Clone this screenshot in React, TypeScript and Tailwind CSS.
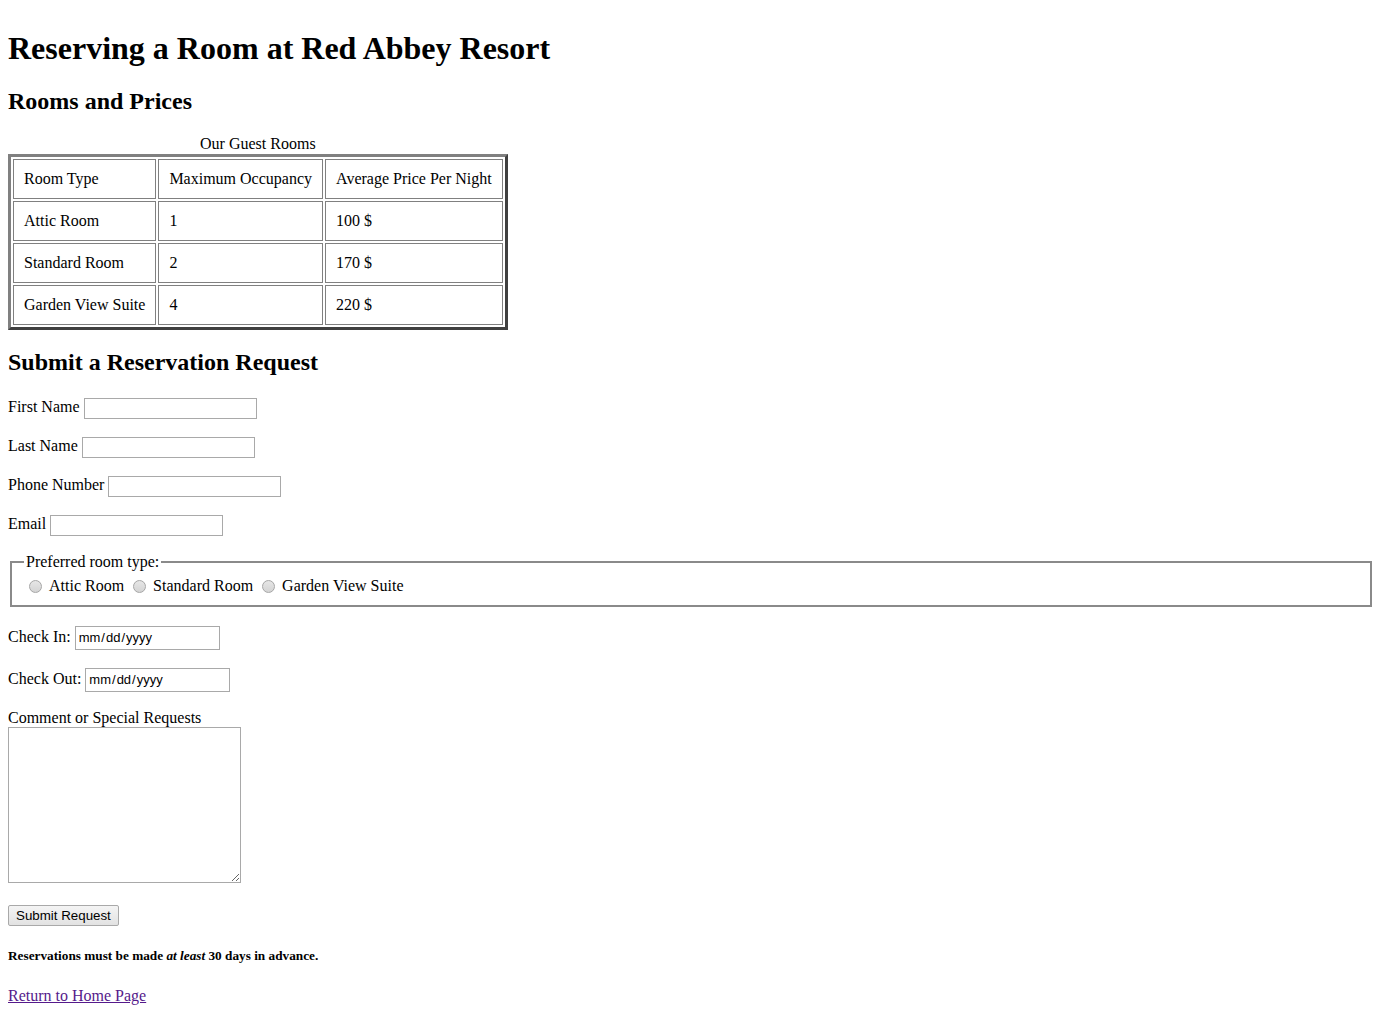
import { useState } from "react";

const rooms = [
  { type: "Attic Room", occ: "1", price: "100 $" },
  { type: "Standard Room", occ: "2", price: "170 $" },
  { type: "Garden View Suite", occ: "4", price: "220 $" },
];

const cell = "border border-[#808080] px-[10px] py-[10px] text-left font-normal";
const textInput =
  "w-[173px] h-[21px] border border-[#a9a9a9] px-[2px] align-middle text-[13px] font-['Liberation_Sans',Arial,sans-serif] outline-none";

function DateBox() {
  return (
    <span className="inline-flex items-center w-[145px] h-[24px] border border-[#a9a9a9] pl-[3px] align-middle text-[13px] text-black font-['Liberation_Sans',Arial,sans-serif]">
      mm<span className="mx-[1px]">/</span>dd<span className="mx-[1px]">/</span>yyyy
    </span>
  );
}

export default function App() {
  const [room, setRoom] = useState("");

  return (
    <div className="bg-white text-black min-h-[1013px] px-2 pt-[1px] pb-4 font-['Liberation_Serif','Times_New_Roman',serif] text-[16px] leading-[normal]">
      <h1 className="mt-[29px] mb-[21px] text-[32px] font-bold">
        Reserving a Room at Red Abbey Resort
      </h1>
      <h2 className="mb-[20px] text-[24px] font-bold">Rooms and Prices</h2>

      <table className="border-separate border-spacing-[2px] border-[3px] border-t-[#808080] border-l-[#808080] border-b-[#404040] border-r-[#404040]">
        <caption className="text-center pb-[1px]">Our Guest Rooms</caption>
        <tbody>
          <tr>
            <th className={cell}>Room Type</th>
            <th className={cell}>Maximum Occupancy</th>
            <th className={cell}>Average Price Per Night</th>
          </tr>
          {rooms.map((r) => (
            <tr key={r.type}>
              <td className={cell}>{r.type}</td>
              <td className={cell}>{r.occ}</td>
              <td className={cell}>{r.price}</td>
            </tr>
          ))}
        </tbody>
      </table>

      <h2 className="mt-[19px] mb-[22px] text-[24px] font-bold">
        Submit a Reservation Request
      </h2>

      <form onSubmit={(e) => e.preventDefault()}>
        <p className="mb-[18px]">
          First Name <input type="text" className={textInput} />
        </p>
        <p className="mb-[18px]">
          Last Name <input type="text" className={textInput} />
        </p>
        <p className="mb-[18px]">
          Phone Number <input type="tel" className={textInput} />
        </p>
        <p className="mb-[17px]">
          Email <input type="email" className={textInput} />
        </p>

        <fieldset className="ml-[2px] -mr-[6px] border-2 border-[#8a8a8a] px-[12px] pb-[8px] pt-[6px]">
          <legend className="px-[2px]">Preferred room type:</legend>
          {["Attic Room", "Standard Room", "Garden View Suite"].map((r) => (
            <label key={r} className="inline-flex items-center mr-[4px]">
              <input
                type="radio"
                name="room"
                checked={room === r}
                onChange={() => setRoom(r)}
                className="appearance-none w-[13px] h-[13px] ml-[5px] mr-[7px] rounded-full border border-[#a6a6a6] bg-gradient-to-b from-[#e6e6e6] to-[#d4d4d4] checked:bg-[radial-gradient(circle,#333_0_3px,#ddd_3.5px)]"
              />
              {r}
            </label>
          ))}
        </fieldset>

        <p className="mt-[19px] mb-[18px]">
          Check In: <DateBox />
        </p>
        <p className="mb-[17px]">
          Check Out: <DateBox />
        </p>

        <p>Comment or Special Requests</p>
        <textarea className="block w-[233px] h-[156px] border border-[#a9a9a9] text-[13px] outline-none" />

        <p className="mt-[22px]">
          <button
            type="submit"
            className="h-[21px] px-[7px] border border-[#a9a9a9] rounded-[2px] bg-gradient-to-b from-[#f4f4f4] to-[#e2e2e2] text-[13.33px] font-['Liberation_Sans',Arial,sans-serif]"
          >
            Submit Request
          </button>
        </p>
      </form>

      <h5 className="mt-[22px] text-[13.28px] font-bold">
        Reservations must be made <em>at least</em> 30 days in advance.
      </h5>

      <p className="mt-[23px]">
        <a href="#" className="text-[#551a8b] underline">
          Return to Home Page
        </a>
      </p>
    </div>
  );
}
